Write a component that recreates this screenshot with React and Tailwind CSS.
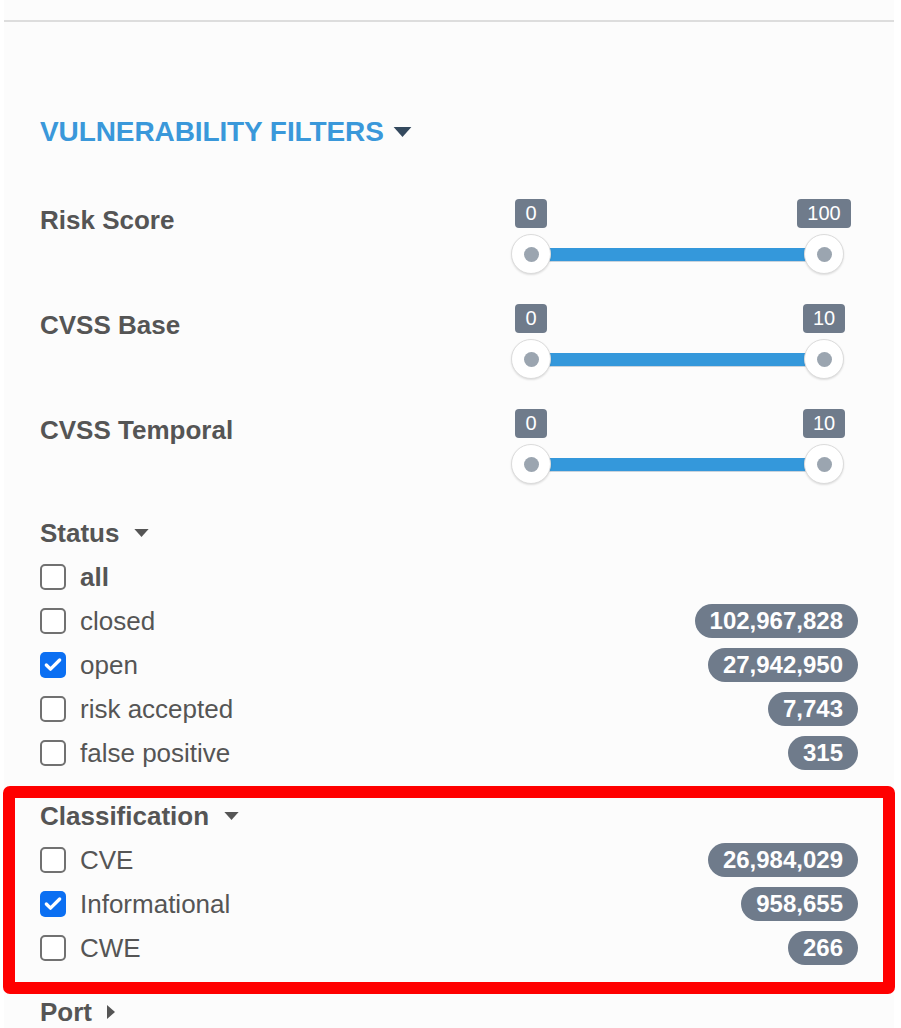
import { Check } from "lucide-react";

const font = { fontFamily: '"Liberation Sans", Arial, sans-serif' };

const statusRows = [
  { label: "all", bold: true },
  { label: "closed", count: "102,967,828" },
  { label: "open", count: "27,942,950", checked: true },
  { label: "risk accepted", count: "7,743" },
  { label: "false positive", count: "315" },
];

const classRows = [
  { label: "CVE", count: "26,984,029" },
  { label: "Informational", count: "958,655", checked: true },
  { label: "CWE", count: "266" },
];

const CaretDown = ({ className }) => (
  <svg viewBox="0 0 16 9" className={className} fill="currentColor">
    <path d="M0 0h16L8 9z" />
  </svg>
);

const CaretRight = ({ className }) => (
  <svg viewBox="0 0 8 14" className={className} fill="currentColor">
    <path d="M0 0l8 7-8 7z" />
  </svg>
);

const Tip = ({ children }) => (
  <div className="w-[40px] flex justify-center">
    <span className="h-[29px] px-[10px] rounded-[4px] bg-[#6f7b8b] text-white text-[20px] leading-[29px] whitespace-nowrap">
      {children}
    </span>
  </div>
);

const Handle = () => (
  <div className="relative z-10 w-[40px] h-[40px] shrink-0 rounded-full bg-white border border-[#dcdcdc] shadow-[0_1px_2px_rgba(0,0,0,0.12)] flex items-center justify-center">
    <div className="w-[15px] h-[15px] rounded-full bg-[#9ba5b0]" />
  </div>
);

const RangeRow = ({ label, max }) => (
  <div className="flex justify-between items-start h-[105px]">
    <div className="mt-[6px] leading-[30px] text-[26px] font-bold text-[#555]">
      {label}
    </div>
    <div className="w-[333px] mr-[14px]">
      <div className="flex justify-between">
        <Tip>0</Tip>
        <Tip>{max}</Tip>
      </div>
      <div className="mt-[6px] flex items-center h-[40px]">
        <Handle />
        <div className="flex-1 -mx-[20px] h-[13px] bg-[#3498db] shadow-[0_1px_0_#c9d3dc]" />
        <Handle />
      </div>
    </div>
  </div>
);

const Section = ({ title }) => (
  <div className="h-[44px] flex items-center text-[26px] font-bold text-[#555]">
    {title}
    <CaretDown className="ml-[15px] w-[15px] h-[8px] text-[#555]" />
  </div>
);

const CheckRow = ({ label, count, checked, bold }) => (
  <div className="h-[44px] flex items-center justify-between">
    <div className="flex items-center">
      {checked ? (
        <div className="w-[26px] h-[26px] rounded-[5px] bg-[#0b6ff2] flex items-center justify-center">
          <Check className="w-[20px] h-[20px] text-white" strokeWidth={4} />
        </div>
      ) : (
        <div className="w-[26px] h-[26px] rounded-[5px] border-2 border-[#717171] bg-white" />
      )}
      <span
        className={`ml-[14px] text-[26px] text-[#555] ${bold ? "font-bold" : ""}`}
      >
        {label}
      </span>
    </div>
    {count && (
      <span className="h-[34px] px-[15px] rounded-full bg-[#6f7b8b] text-white text-[24px] font-bold leading-[34px]">
        {count}
      </span>
    )}
  </div>
);

export default function App() {
  return (
    <div className="min-h-screen bg-white" style={font}>
      <div className="ml-[4px] w-[890px] min-h-[1028px] bg-[#fcfcfc] pt-[20px]">
        <div className="h-[2px] bg-[#dddddd]" />
        <div className="px-[36px]">
          <div className="mt-[94px] h-[32px] flex items-center">
            <span className="text-[28px] font-bold text-[#3a98da] tracking-[-0.1px]">
              VULNERABILITY FILTERS
            </span>
            <CaretDown className="ml-[9px] w-[19px] h-[10px] text-[#34495e]" />
          </div>

          <div className="mt-[51px]">
            <RangeRow label="Risk Score" max="100" />
            <RangeRow label="CVSS Base" max="10" />
            <RangeRow label="CVSS Temporal" max="10" />
          </div>

          <div className="-mt-[3px]">
            <Section title="Status" />
            {statusRows.map((r) => (
              <CheckRow key={r.label} {...r} />
            ))}
          </div>

          <div className="relative mt-[19px]">
            <Section title="Classification" />
            {classRows.map((r) => (
              <CheckRow key={r.label} {...r} />
            ))}
            <div className="pointer-events-none absolute -left-[37px] -right-[37px] -top-[8px] -bottom-[24px] border-[12px] border-[#ff0000] rounded-[7px]" />
          </div>

          <div className="mt-[20px] h-[44px] flex items-center text-[26px] font-bold text-[#555]">
            Port
            <CaretRight className="ml-[15px] w-[8px] h-[14px] text-[#555]" />
          </div>
        </div>
      </div>
    </div>
  );
}
